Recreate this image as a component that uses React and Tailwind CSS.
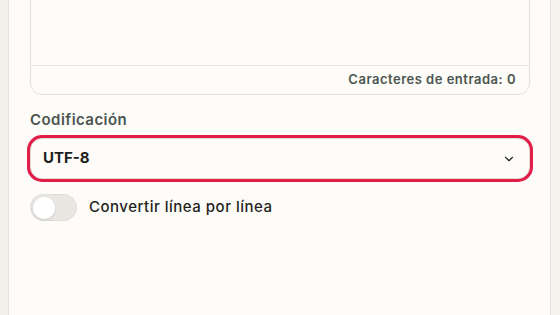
import React from 'react';
import { ChevronDown } from 'lucide-react';

export default function App() {
  return (
    <div
      className="flex h-[315px] w-full overflow-hidden bg-[#fdfcf8]"
      style={{ fontFamily: 'Inter, "Noto Sans", sans-serif' }}
    >
      <div className="w-[9px] shrink-0 bg-[#f1f0eb] border-r border-[#e4e2db]" />

      <main className="flex-1 border-r border-[#e4e2db] pl-[21px] pr-[20px]">
        <div className="-mt-[20px] rounded-xl border border-[#e3e1da] bg-[#fdfcf8]">
          <textarea className="block h-[84px] w-full resize-none bg-transparent outline-none" />
          <div className="flex h-[29px] items-center justify-end border-t border-[#e8e6df] px-[13px]">
            <span className="text-[13px] font-semibold tracking-[0.5px] text-[#4b5550]">Caracteres de entrada: 0</span>
          </div>
        </div>

        <label className="mt-[15px] mb-[8px] block text-[15px] font-semibold leading-5 tracking-[0.45px] text-[#4b5550]">
          Codificación
        </label>

        <div className="flex h-[41px] items-center justify-between rounded-xl border border-[#dedbd3] bg-[#fdfcf8] px-3 ring-[3px] ring-[#e11d48]">
          <span className="text-[15px] font-bold text-[#1c1f1d]">UTF-8</span>
          <ChevronDown size={14} strokeWidth={2} className="mr-[1px] text-[#222]" />
        </div>

        <div className="mt-[15px] flex items-center gap-3">
          <div className="flex h-[27px] w-[47px] items-center rounded-full border border-[#dedcd5] bg-[#e9e7e2] px-[2px]">
            <div className="h-[22px] w-[22px] rounded-full bg-white shadow-sm" />
          </div>
          <span className="text-[15px] font-medium tracking-[0.5px] text-[#1f2421]">Convertir línea por línea</span>
        </div>
      </main>

      <div className="w-[9px] shrink-0 bg-[#f5f4ef]" />
    </div>
  );
}
